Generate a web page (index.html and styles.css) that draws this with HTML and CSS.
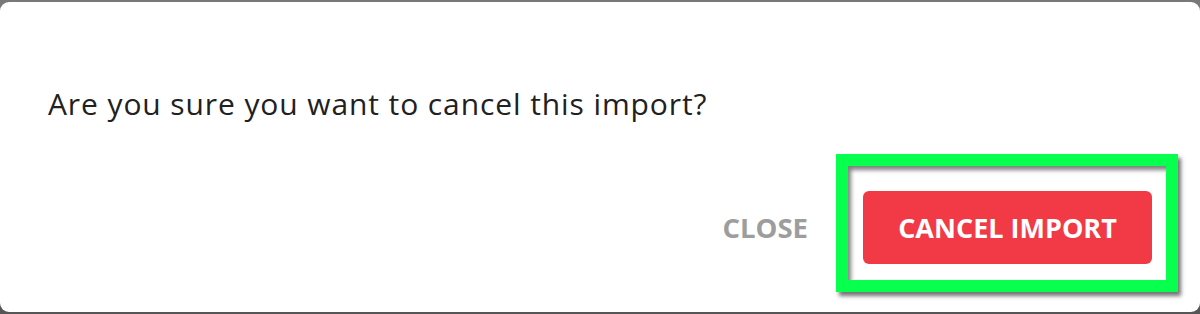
FILE: index.html
```html
<!DOCTYPE html>
<html lang="en">
<head>
<meta charset="utf-8">
<title>Cancel import</title>
<link rel="stylesheet" href="styles.css">
</head>
<body>
  <div class="dialog">
    <p class="message">Are you sure you want to cancel this import?</p>
    <div class="actions">
      <button class="btn btn-close" type="button">CLOSE</button>
      <button class="btn btn-danger" type="button">CANCEL IMPORT</button>
      <div class="highlight"></div>
    </div>
  </div>
</body>
</html>
```

FILE: styles.css
```css
html, body {
  margin: 0;
  padding: 0;
}
body {
  width: 1200px;
  height: 314px;
  overflow: hidden;
  background: linear-gradient(#787878 0, #787878 50%, #565656 50%, #565656 100%);
  font-family: "Open Sans", "Noto Sans", sans-serif;
}
.dialog {
  margin-top: 2px;
  height: 310px;
  box-sizing: border-box;
  background: #ffffff;
  border-radius: 9px;
  padding: 83px 48px 0 48px;
}
.message {
  margin: 0;
  font-size: 30px;
  line-height: 38px;
  letter-spacing: 0.9px;
  color: #212121;
  font-weight: 400;
}
.actions {
  position: relative;
  margin-top: 68px;
  display: flex;
  justify-content: flex-end;
  align-items: center;
  gap: 55px;
}
.btn {
  font-family: "Open Sans", "Noto Sans", sans-serif;
  font-size: 27px;
  font-weight: 700;
  border: none;
  background: none;
  padding: 0;
  margin: 0;
  cursor: pointer;
}
.btn-close {
  color: #9d9d9d;
  font-size: 27.5px;
}
.btn-danger {
  height: 73px;
  width: 289px;
  background: #f13a46;
  color: #ffffff;
  border-radius: 6px;
}
.highlight {
  position: absolute;
  right: -26px;
  top: -37px;
  width: 342px;
  height: 138px;
  box-sizing: border-box;
  border: 12px solid #07ff4d;
  box-shadow: 3px 4px 4px rgba(0, 0, 0, 0.55), inset 3px 4px 4px rgba(0, 0, 0, 0.5);
  pointer-events: none;
}
```
